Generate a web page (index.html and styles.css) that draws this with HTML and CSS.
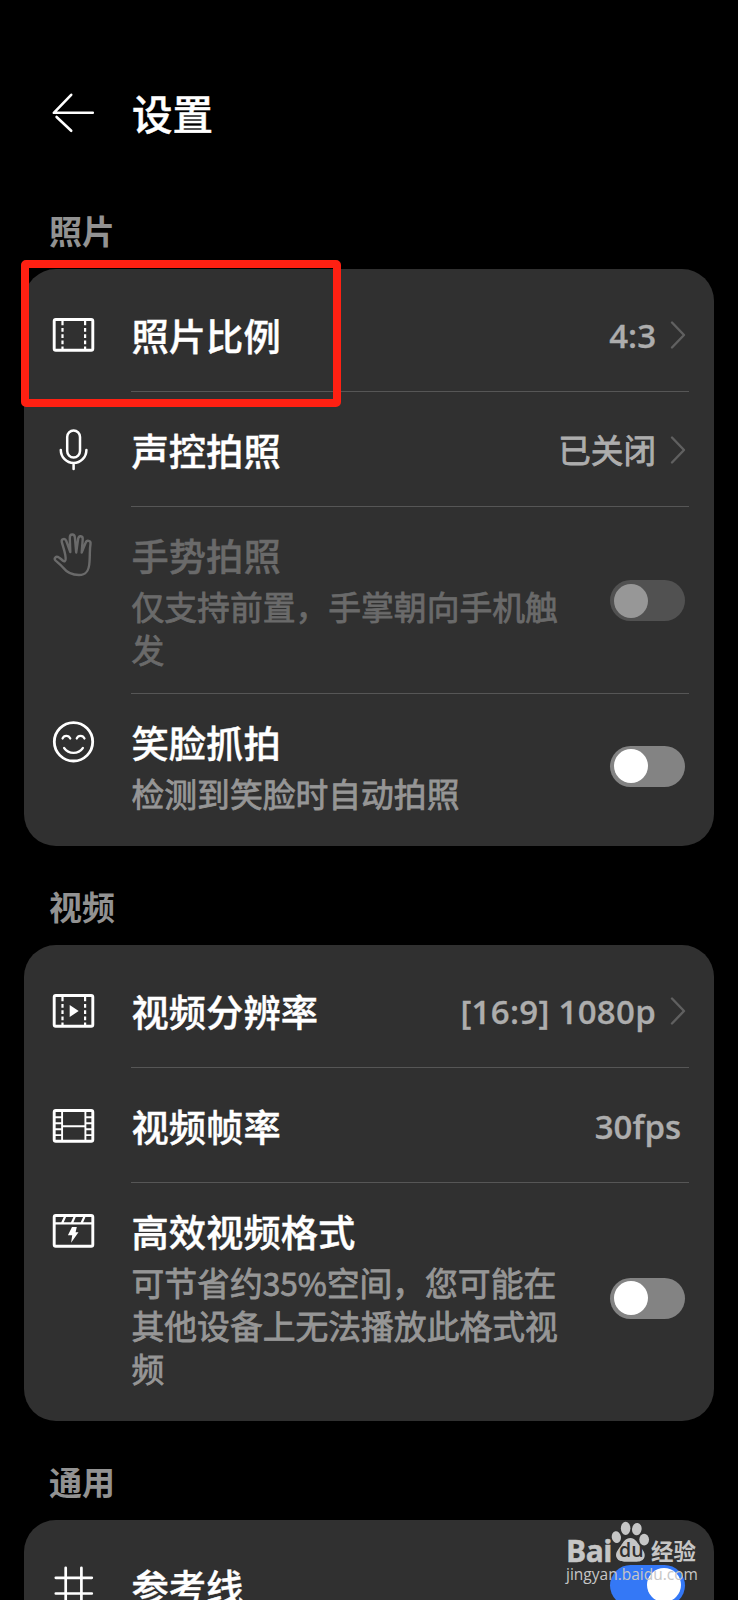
FILE: index.html
```html
<!DOCTYPE html>
<html lang="zh-CN">
<head>
<meta charset="utf-8">
<title>设置</title>
<link rel="stylesheet" href="styles.css">
</head>
<body>
<div class="screen">
  <header class="header">
    <svg class="icon" viewBox="0 0 42 42"><path d="M19.2 2.8 1.800 20.800h39M4.600 25 19.200 38.800" stroke-width="2.600"/></svg>
    <h1 class="page-title">设置</h1>
  </header>

  <h2 class="section">照片</h2>
  <div class="card">
    <div class="row line">
      <svg class="icon" viewBox="-0.5 0 42 42"><rect x="1.700" y="5.500" width="38.600" height="30.800" rx="1.600" stroke-width="2.900"/><path d="M10 6.600v4.600M10 14v3.800M10 20.200v3.800M10 26.400v3.800M10 32.600v3M32.600 6.600v4.600M32.600 14v3.800M32.600 20.200v3.800M32.600 26.400v3.800M32.600 32.600v3" stroke-width="2.200" stroke-linecap="butt"/></svg>
      <div class="text"><div class="name">照片比例</div></div>
      <span class="value">4:3</span>
      <svg class="chevron" viewBox="0 0 16 30"><path d="M2 2.500 14 15 2 27.500"/></svg>
    </div>
    <div class="row line">
      <svg class="icon" viewBox="-0.5 0 42 42"><rect x="14.700" y="1.500" width="12.800" height="27" rx="6.400" stroke-width="2.500"/><path d="M8.300 21a12.800 13 0 0 0 25.600 0M21.100 34.300v5.800" stroke-width="2.500"/></svg>
      <div class="text"><div class="name">声控拍照</div></div>
      <span class="value zh">已关闭</span>
      <svg class="chevron" viewBox="0 0 16 30"><path d="M2 2.500 14 15 2 27.500"/></svg>
    </div>
    <div class="row tall line disabled">
      <svg class="icon" viewBox="-0.5 0 42 42"><path d="M13 26C14 22 11 14 9.300 8.200 8.500 4.800 12.600 3.800 13.800 7L17.800 18 17.300 4C17.200-.600 22-.600 22.400 3.500L23.700 18.500 25.600 5C26.200 1 30.600 1.600 30.200 5.400L29.200 18.500 33 9C34.200 5.400 38.600 6.400 38 10 37 16 37.600 20 37 28 36.500 37 33.500 41 26.500 41 19 41 14 38 10.500 33.500 7.500 30 5 28.400 3 26.500 1 24.200 3.400 22 6 23.200 8.800 24.600 12 29.500 13 26Z" stroke-width="2.400"/></svg>
      <div class="text"><div class="name">手势拍照</div><p class="desc">仅支持前置，手掌朝向手机触发</p></div>
      <span class="toggle"></span>
    </div>
    <div class="row tall">
      <svg class="icon" viewBox="-0.5 0 42 42"><circle cx="21" cy="20.800" r="19.200" stroke-width="2.800"/><path d="M10 17.500c1.400-3.600 6.200-3.600 7.800 0M24.200 17.500c1.400-3.600 6.200-3.600 7.800 0M11.600 27c4.600 6.500 14.200 6.500 18.800 0" stroke-width="2.200"/></svg>
      <div class="text"><div class="name">笑脸抓拍</div><p class="desc">检测到笑脸时自动拍照</p></div>
      <span class="toggle"></span>
    </div>
  </div>

  <h2 class="section">视频</h2>
  <div class="card">
    <div class="row line">
      <svg class="icon" viewBox="-0.5 0 42 42"><rect x="1.700" y="5.500" width="38.600" height="30.800" rx="1.600" stroke-width="2.900"/><path d="M10 6.600v4.600M10 14v3.800M10 20.200v3.800M10 26.400v3.800M10 32.600v3M32.600 6.600v4.600M32.600 14v3.800M32.600 20.200v3.800M32.600 26.400v3.800M32.600 32.600v3" stroke-width="2.200" stroke-linecap="butt"/><path class="solid" d="M17.200 15v12l9-6z"/></svg>
      <div class="text"><div class="name">视频分辨率</div></div>
      <span class="value wide">[16:9] 1080p</span>
      <svg class="chevron" viewBox="0 0 16 30"><path d="M2 2.500 14 15 2 27.500"/></svg>
    </div>
    <div class="row line">
      <svg class="icon" viewBox="-0.5 0 42 42"><rect x="1.700" y="5.500" width="38.600" height="30.800" rx="1.600" stroke-width="2.900"/><path d="M9.600 6v30M32.900 6v30M10 21.200h23M2 12.300h7.600M2 18.300h7.600M2 24.200h7.600M2 30.100h7.600M33 12.300h7.600M33 18.300h7.600M33 24.200h7.600M33 30.100h7.600" stroke-width="1.900"/></svg>
      <div class="text"><div class="name">视频帧率</div></div>
      <span class="value last">30fps</span>
    </div>
    <div class="row tall">
      <svg class="icon" viewBox="-0.5 0 42 42"><rect x="1.700" y="5.500" width="38.600" height="30.800" rx="1.600" stroke-width="2.900"/><path d="M2 13.400h38M12.400 7l-2.600 5.800M22.100 7l-2.600 5.800M31.800 7l-2.600 5.800" stroke-width="2.200"/><path class="solid" d="M19.500 17h4.800l-1.200 5.200h2.900l-7.400 10.500 1.100-7.500h-4.300z"/></svg>
      <div class="text"><div class="name">高效视频格式</div><p class="desc">可节省约<span class="num">35%</span>空间，您可能在其他设备上无法播放此格式视频</p></div>
      <span class="toggle"></span>
    </div>
  </div>

  <h2 class="section">通用</h2>
  <div class="card">
    <div class="row">
      <svg class="icon" viewBox="-0.5 0 42 42"><path d="M13.200 2.800v37M28.900 2.800v37M3.300 12.800h36M3.300 28.500h36" stroke-width="2.700"/></svg>
      <div class="text"><div class="name">参考线</div></div>
      <span class="toggle on"></span>
    </div>
  </div>

  <div class="highlight"></div>

  <div class="watermark">
    <div class="brand">
      <span class="bai">Bai</span>
      <span class="paw">
        <svg viewBox="0 0 40 42"><ellipse cx="5.500" cy="16" rx="4.700" ry="6" transform="rotate(-10 5.500 16)"/><ellipse cx="15" cy="7" rx="4.900" ry="6.700"/><ellipse cx="26.500" cy="7.800" rx="4.900" ry="6.400" transform="rotate(8 26.500 7.800)"/><ellipse cx="34" cy="18.500" rx="5" ry="6"/><path d="M20 17c4.500 0 6.500 4 9.500 8 3.500 4.500 6.500 8 4.500 12.500-2.500 5-9.500 3.700-14 3.700s-11.500 1.200-14-3.700c-2.200-4.500.500-8 4-12.500 3-4 4.500-8 10-8z"/></svg>
        <span class="du">du</span>
      </span>
      <span class="jy">经验</span>
    </div>
    <div class="url">jingyan.baidu.com</div>
  </div>
</div>
</body>
</html>
```
FILE: styles.css
```css
* { box-sizing: border-box; margin: 0; padding: 0; }

html, body { height: 1600px; overflow: hidden; background: #000; }

.screen {
  position: relative;
  width: 738px;
  height: 1600px;
  overflow: hidden;
  background: #000;
  color: #fff;
  font-family: "Noto Sans CJK SC", sans-serif;
}

.header {
  display: flex;
  align-items: flex-start;
  height: 210px;
  padding: 15px 53px 0 52px;
}
.header .icon { margin-top: 77px; }
.page-title {
  margin: 68px 0 0 38px;
  font-size: 40.500px;
  font-weight: 500;
  line-height: 60px;
  -webkit-text-stroke: 0.5px currentColor;
}

.icon {
  flex: none;
  width: 42px;
  height: 42px;
  overflow: visible;
  fill: none;
  stroke: #fff;
  stroke-linecap: round;
  stroke-linejoin: round;
}
.icon .solid { fill: #fff; stroke: none; }

.section {
  height: 99px;
  padding: 40px 0 0 49px;
  font-size: 33px;
  font-weight: 700;
  line-height: 40px;
  color: #929292;
}
.header + .section { height: 59px; padding-top: 0; }

.card {
  margin: 0 24px;
  padding: 8px 0;
  border-radius: 32px;
  background: #303030;
}

.row {
  position: relative;
  display: flex;
  align-items: center;
  height: 115px;
  padding: 0 28px;
}
.row.line::after {
  content: "";
  position: absolute;
  left: 107px;
  right: 25px;
  bottom: 0;
  height: 1px;
  background: #565656;
}
.row.tall { height: auto; padding-top: 24px; padding-bottom: 23px; }
.row.tall .icon { align-self: flex-start; margin-top: 3px; }

.text { width: 444px; margin-left: 37.500px; flex: 0 1 auto; }
.row:not(.tall) .text { width: auto; padding-top: 2px; }
.name {
  font-size: 37.3px;
  font-weight: 500;
  line-height: 49px;
  white-space: nowrap;
  -webkit-text-stroke: 0.4px currentColor;
}
.desc {
  margin-top: 4px;
  margin-bottom: 1px;
  font-size: 32.8px;
  font-weight: 400;
  line-height: 43px;
  color: #969696;
  -webkit-text-stroke: 0.8px currentColor;
}
.num { font-size: 31.500px; line-height: 1; }

.value {
  margin-left: auto;
  margin-right: 14px;
  padding-top: 2px;
  font-family: "Open Sans", "Noto Sans CJK SC", sans-serif;
  font-size: 33px;
  font-weight: 600;
  line-height: 44px;
  color: #adadad;
  -webkit-text-stroke: 0.3px currentColor;
}
.value.zh {
  padding: 0 0 2px;
  font-family: "Noto Sans CJK SC", sans-serif;
  font-size: 32.600px;
  font-weight: 400;
  -webkit-text-stroke: 0.8px currentColor;
}
.value.wide { letter-spacing: 0.3px; }
.value.last { margin-right: 5px; }

.chevron {
  width: 16px;
  height: 30px;
  fill: none;
  stroke: #606060;
  stroke-width: 2.4;
  stroke-linecap: round;
  stroke-linejoin: round;
}

.toggle {
  display: flex;
  flex: none;
  align-items: center;
  width: 75px;
  height: 41px;
  margin: 0 0.700px 1px auto;
  padding: 0 4px;
  border-radius: 21px;
  background: #838383;
}
.toggle::before {
  content: "";
  width: 34px;
  height: 34px;
  border-radius: 50%;
  background: #fff;
}
.toggle.on { justify-content: flex-end; background: #3478f6; }

.disabled .name, .disabled .desc { color: #6a6a6a; }
.disabled .icon { stroke: #6a6a6a; }
.disabled .toggle { background: #515151; }
.disabled .toggle::before { background: #979797; }

.highlight {
  position: absolute;
  left: 21px;
  top: 260px;
  width: 320px;
  height: 147px;
  border: 8.400px solid #ff2012;
  border-radius: 5px;
}

.watermark {
  position: absolute;
  left: 566px;
  top: 1521px;
  width: 134px;
  color: #c6c6c6;
}
.brand { display: flex; height: 42px; align-items: flex-end; }
.bai {
  width: 45px;
  font: 700 30px/24px "Open Sans", sans-serif;
  letter-spacing: -0.5px;
  -webkit-text-stroke: 0.5px currentColor;
}
.paw { position: relative; width: 39px; height: 42px; }
.paw svg { width: 39px; height: 42px; fill: #c6c6c6; display: block; }
.du {
  position: absolute;
  left: 8px;
  top: 18px;
  font: 600 19.500px/22px "Open Sans", sans-serif;
  color: #303030;
}
.jy { margin-left: 1px; font-size: 22.500px; font-weight: 700; line-height: 26px; white-space: nowrap; }
.url {
  font: 400 15.500px/22px "Open Sans", sans-serif;
  white-space: nowrap;
}
```
